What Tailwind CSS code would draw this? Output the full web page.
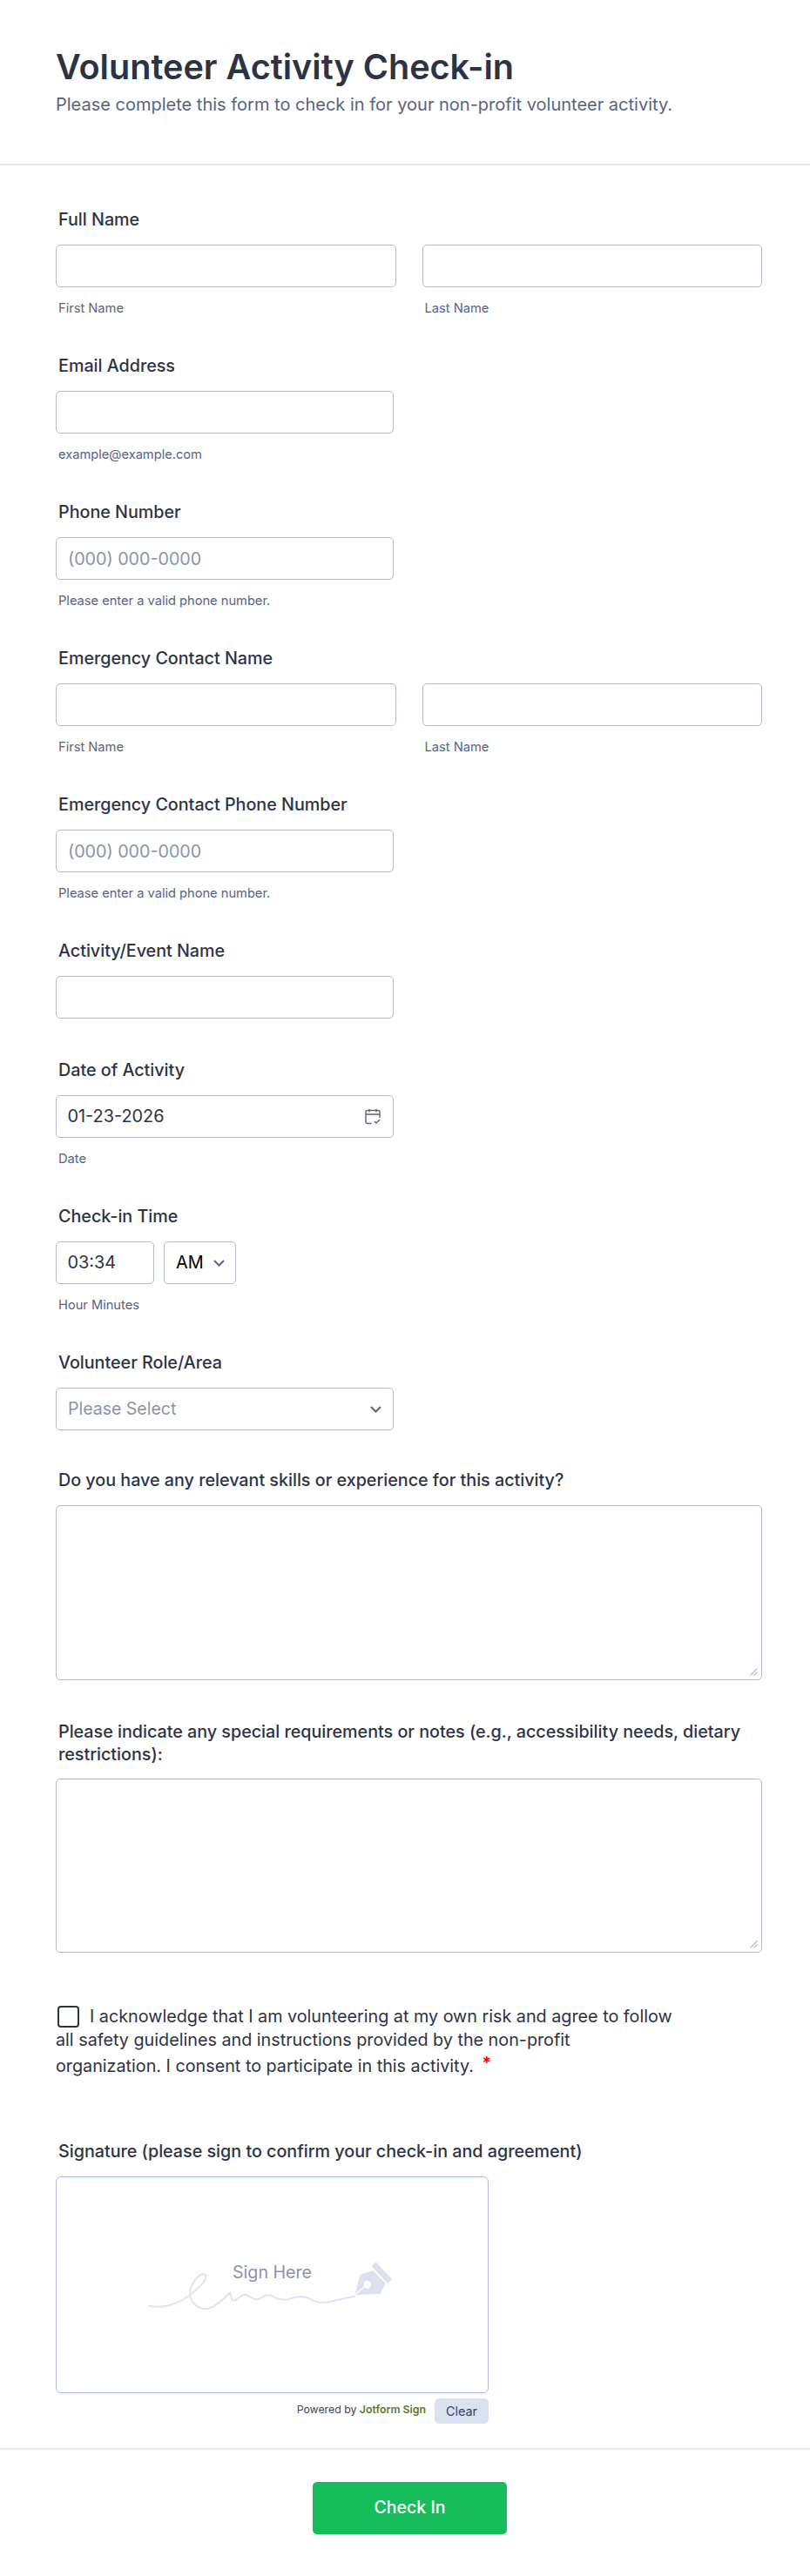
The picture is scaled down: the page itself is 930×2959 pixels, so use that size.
<!DOCTYPE html>
<html><head><meta charset="utf-8"><title>Volunteer Activity Check-in</title>
<script src="https://cdn.jsdelivr.net/npm/@tailwindcss/browser@4"></script></head>
<body class="bg-white font-['Inter','Liberation_Sans',sans-serif] text-[#2c3345]">
<div class="w-[930px] h-[2959px] overflow-hidden">
<header class="h-[190px] px-[64px] pt-[52px] border-b-2 border-[#e3e5f0]">
<h1 class="text-[39.6px] leading-[50px] font-semibold">Volunteer Activity Check-in</h1>
<p class="text-[20px] leading-[26px] mt-[5px] text-[#57647e]">Please complete this form to check in for your non-profit volunteer activity.</p>
</header>
<main class="px-[64px]">
<section class="pt-[50px]">
<label class="block pl-[3px] text-[19.72px] leading-[24px] font-medium">Full Name</label>
<div class="mt-[17px] grid grid-cols-2 gap-[30px] w-[811px]">
<div><input class="block w-[391px] h-[49px] bg-white border border-[#b4b9cb] rounded-[5px]"><p class="mt-[16px] pl-[3px] text-[14.65px] leading-[16px] text-[#57647e]">First Name</p></div>
<div><input class="block w-full h-[49px] bg-white border border-[#b4b9cb] rounded-[5px]"><p class="mt-[16px] pl-[3px] text-[14.65px] leading-[16px] text-[#57647e]">Last Name</p></div>
</div>
</section>
<section class="pt-[46px]">
<label class="block pl-[3px] text-[19.72px] leading-[24px] font-medium">Email Address</label>
<input class="mt-[17px] block w-[388px] h-[49px] bg-white border border-[#b4b9cb] rounded-[5px]">
<p class="mt-[16px] pl-[3px] text-[14.65px] leading-[16px] text-[#57647e]">example@example.com</p>
</section>
<section class="pt-[46px]">
<label class="block pl-[3px] text-[19.72px] leading-[24px] font-medium">Phone Number</label>
<input placeholder="(000) 000-0000" class="mt-[17px] block w-[388px] h-[49px] px-[13px] text-[19.7px] bg-white border border-[#b4b9cb] rounded-[5px] placeholder:text-[#8894ab]">
<p class="mt-[16px] pl-[3px] text-[14.65px] leading-[16px] text-[#57647e]">Please enter a valid phone number.</p>
</section>
<section class="pt-[46px]">
<label class="block pl-[3px] text-[19.72px] leading-[24px] font-medium">Emergency Contact Name</label>
<div class="mt-[17px] grid grid-cols-2 gap-[30px] w-[811px]">
<div><input class="block w-[391px] h-[49px] bg-white border border-[#b4b9cb] rounded-[5px]"><p class="mt-[16px] pl-[3px] text-[14.65px] leading-[16px] text-[#57647e]">First Name</p></div>
<div><input class="block w-full h-[49px] bg-white border border-[#b4b9cb] rounded-[5px]"><p class="mt-[16px] pl-[3px] text-[14.65px] leading-[16px] text-[#57647e]">Last Name</p></div>
</div>
</section>
<section class="pt-[46px]">
<label class="block pl-[3px] text-[19.72px] leading-[24px] font-medium">Emergency Contact Phone Number</label>
<input placeholder="(000) 000-0000" class="mt-[17px] block w-[388px] h-[49px] px-[13px] text-[19.7px] bg-white border border-[#b4b9cb] rounded-[5px] placeholder:text-[#8894ab]">
<p class="mt-[16px] pl-[3px] text-[14.65px] leading-[16px] text-[#57647e]">Please enter a valid phone number.</p>
</section>
<section class="pt-[46px]">
<label class="block pl-[3px] text-[19.72px] leading-[24px] font-medium">Activity/Event Name</label>
<input class="mt-[17px] block w-[388px] h-[49px] bg-white border border-[#b4b9cb] rounded-[5px]">
</section>
<section class="pt-[47px]">
<label class="block pl-[3px] text-[19.72px] leading-[24px] font-medium">Date of Activity</label>
<div class="mt-[17px] flex items-center justify-between w-[388px] h-[49px] pl-[12.5px] pr-[14px] text-[19.86px] border border-[#b4b9cb] rounded-[5px]">
<span class="pt-[1px]">01-23-2026</span>
<svg width="18" height="19" viewBox="0 0 18 19" fill="none" stroke="#57647e" stroke-width="1.4"><path d="M7.500 17.500H3a2 2 0 0 1-2-2V4.500a2 2 0 0 1 2-2h12a2 2 0 0 1 2 2V11M1 7h16M5 1v3.500M13 1v3.500"/><path d="M11 15l2 2 4-4"/></svg>
</div>
<p class="mt-[16px] pl-[3px] text-[14.65px] leading-[16px] text-[#57647e]">Date</p>
</section>
<section class="pt-[46px]">
<label class="block pl-[3px] text-[19.72px] leading-[24px] font-medium">Check-in Time</label>
<div class="mt-[17px] flex gap-[11px]">
<div class="flex items-center w-[113px] h-[49px] pl-[12.5px] text-[19.86px] border border-[#b4b9cb] rounded-[5px]"><span class="pt-[1px]">03:34</span></div>
<div class="flex items-center justify-between w-[83px] h-[49px] pl-[13px] pr-[12px] text-[19.86px] text-black border border-[#b4b9cb] rounded-[5px]"><span class="pt-[1px]">AM</span>
<svg width="13" height="8" viewBox="0 0 13 8" fill="none" stroke="#57647e" stroke-width="2"><path d="M1 1l5.500 5.500L12 1"/></svg></div>
</div>
<p class="mt-[16px] pl-[3px] text-[14.65px] leading-[16px] text-[#57647e]">Hour Minutes</p>
</section>
<section class="pt-[46px]">
<label class="block pl-[3px] text-[19.72px] leading-[24px] font-medium">Volunteer Role/Area</label>
<div class="mt-[17px] flex items-center justify-between w-[388px] h-[49px] pl-[13px] pr-[13px] text-[19.5px] text-[#8894ab] border border-[#b4b9cb] rounded-[5px]"><span class="pt-[1px]">Please Select</span>
<svg width="13" height="8" viewBox="0 0 13 8" fill="none" stroke="#57647e" stroke-width="2"><path d="M1 1l5.500 5.500L12 1"/></svg></div>
</section>
<section class="pt-[45px]">
<label class="block pl-[3px] text-[19.72px] leading-[24px] font-medium">Do you have any relevant skills or experience for this activity?</label>
<div class="relative mt-[17px] w-[811px] h-[201px]">
<textarea class="block w-full h-full resize-none border border-[#b4b9cb] rounded-[5px]"></textarea>
<svg class="absolute right-[5px] bottom-[5px]" width="9" height="9" viewBox="0 0 9 9" fill="none" stroke="#b4b9cb" stroke-width="1.2"><path d="M0.500 8.500L8.500 0.500M4.500 8.500L8.500 4.500"/></svg>
</div>
</section>
<section class="pt-[46px]">
<label class="block pl-[3px] text-[19.72px] leading-[26px] font-medium">Please indicate any special requirements or notes (e.g., accessibility needs, dietary restrictions):</label>
<div class="relative mt-[15px] w-[811px] h-[200px]">
<textarea class="block w-full h-full resize-none border border-[#b4b9cb] rounded-[5px]"></textarea>
<svg class="absolute right-[5px] bottom-[5px]" width="9" height="9" viewBox="0 0 9 9" fill="none" stroke="#b4b9cb" stroke-width="1.2"><path d="M0.500 8.500L8.500 0.500M4.500 8.500L8.500 4.500"/></svg>
</div>
</section>
<section class="pt-[60px] text-[19.76px] leading-[27px]">
<p><span class="inline-block align-[-6px] w-[25px] h-[25px] ml-[2px] mr-[12px] border-2 border-[#2c3345] rounded-[4px]"></span>I acknowledge that I am volunteering at my own risk and agree to follow<br>all safety guidelines and instructions provided by the non-profit<br>organization. I consent to participate in this activity. <span class="text-[#ff0000] font-semibold ml-[4px] align-[3px]">*</span></p>
</section>
<section class="pt-[72px]">
<label class="block pl-[3px] text-[19.72px] leading-[24px] font-medium">Signature (please sign to confirm your check-in and agreement)</label>
<div class="relative mt-[17px] w-[497px] h-[249px] border border-[#a6bfe6] rounded-[6px]">
<span class="absolute left-0 right-0 top-[95px] text-center text-[19.6px] leading-[28px] text-[#8b93ad]">Sign Here</span>
<svg class="absolute left-[85px] top-[80px]" width="320" height="120" viewBox="0 0 960 360" fill="none">
<path d="M63 203C110 212 160 200 205 165C240 135 265 115 258 98C245 85 215 110 205 150C200 190 230 215 265 213C300 205 320 175 342 158C345 165 345 185 355 185C375 180 380 160 398 165C415 170 420 185 440 180C460 170 470 160 490 170C510 182 530 185 550 178C575 170 600 168 620 180C640 192 660 195 690 188L770 170" stroke="#dfe3f3" stroke-width="6" stroke-linecap="round"/>
<path d="M772 165L790 95L835 82L878 125L860 162Z" fill="#dde1ef"/>
<path d="M845 52L900 112L885 127L830 67Z" fill="#dde1ef"/>
<circle cx="815" cy="130" r="13" fill="#fff"/><path d="M772 165L812 132" stroke="#fff" stroke-width="4"/>
</svg>
</div>
<div class="flex justify-end items-start gap-[10px] w-[497px] mt-[6px]">
<span class="text-[12.3px] leading-[20px] text-[#3f4658] mt-[3px]">Powered by <b class="font-semibold text-[#5d7a1f]">Jotform Sign</b></span>
<button class="w-[62px] h-[29px] rounded-[5px] bg-[#dce1f0] text-[14.4px] text-[#37426b]">Clear</button>
</div>
</section>
</main>
<footer class="mt-[28px] pt-[37px] border-t-2 border-[#e8ebf4]">
<button class="block ml-[359px] w-[223px] h-[60px] rounded-[5px] bg-[#18bd5b] text-white text-[19.5px] font-medium">Check In</button>
</footer>
</div>
</body></html>
